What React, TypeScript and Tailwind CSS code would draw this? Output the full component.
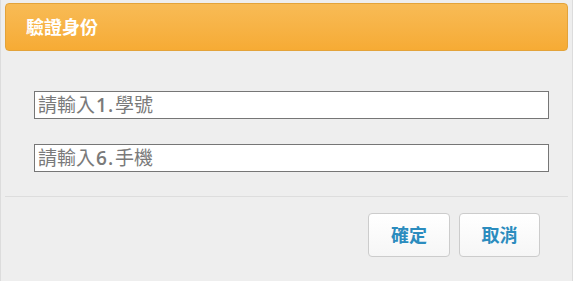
import React from "react";

const font = { fontFamily: '"Open Sans", "Noto Sans CJK TC", sans-serif' };

function Field({ pre, num, post }: { pre: string; num: string; post: string }) {
  return (
    <div className="h-[28px] w-[515px] border border-[#767676] bg-white pl-[3px] flex items-center text-[19px] text-[#7a7a7a] leading-none whitespace-nowrap">
      <span>{pre}</span>
      <span className="font-semibold px-[1px] tracking-[1px]">{num}</span>
      <span>{post}</span>
    </div>
  );
}

export default function App() {
  return (
    <div
      className="w-[573px] h-[281px] bg-[#eeeeee] border-l border-r border-[#dcdcdc] box-border overflow-hidden"
      style={font}
    >
      <div className="pt-[3px] px-[4px]">
        <div className="h-[48px] rounded-[4px] border border-[#e3a33a] bg-gradient-to-b from-[#f8bb55] to-[#f6ab34] flex items-center pl-[20px]">
          <span className="text-white font-bold text-[18px] leading-none">驗證身份</span>
        </div>
      </div>
      <div className="px-[33px] pt-[40px] flex flex-col gap-[25px]">
        <Field pre="請輸入" num="1." post="學號" />
        <Field pre="請輸入" num="6." post="手機" />
      </div>
      <div className="mx-[4px] mt-[24px] border-t border-[#dddddd]" />
      <div className="flex justify-end gap-[9px] pr-[32px] pt-[16px]">
        <button className="w-[82px] h-[44px] rounded-[4px] border border-[#cccccc] bg-gradient-to-b from-white to-[#f6f6f6] text-[#2b8cbe] font-bold text-[18px]">
          確定
        </button>
        <button className="w-[81px] h-[44px] rounded-[4px] border border-[#cccccc] bg-gradient-to-b from-white to-[#f6f6f6] text-[#2b8cbe] font-bold text-[18px]">
          取消
        </button>
      </div>
    </div>
  );
}
